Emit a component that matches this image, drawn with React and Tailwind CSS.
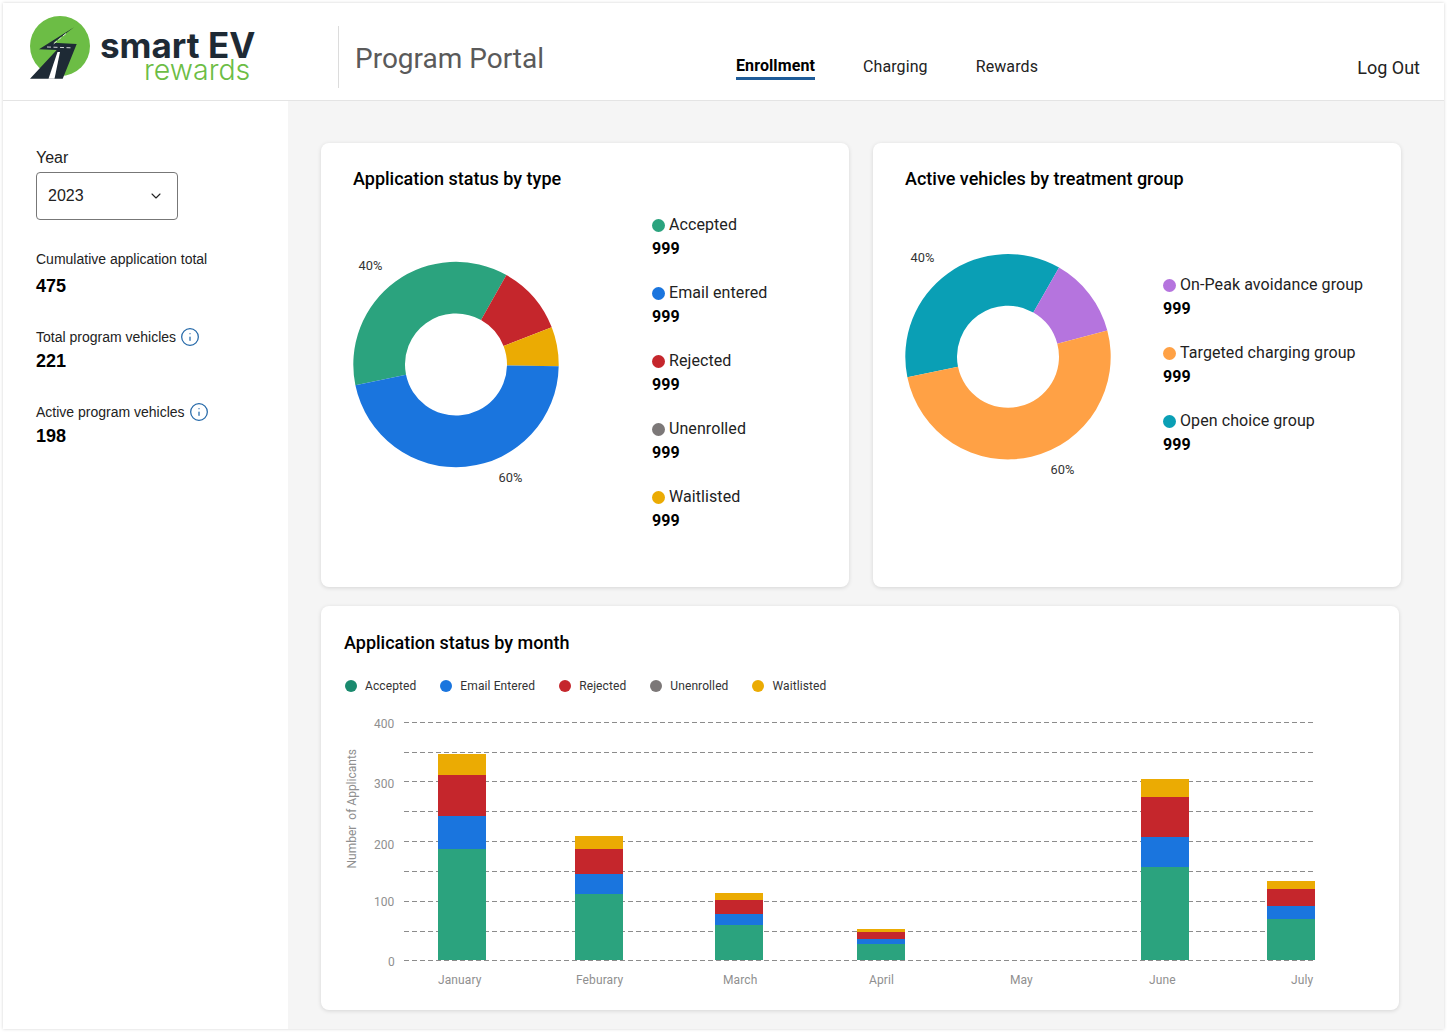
import React from "react";
import { ChevronDown, Info } from "lucide-react";

const GREEN = "#2ba37e";
const BLUE = "#1a75de";
const RED = "#c5262c";
const GREY = "#7c7878";
const YELLOW = "#ebab03";
const PURPLE = "#b574de";
const ORANGE = "#ffa145";
const TEAL = "#0a9fb5";

const roboto = { fontFamily: "Roboto, sans-serif" };

const typeLegend = [
  { label: "Accepted", color: GREEN },
  { label: "Email entered", color: BLUE },
  { label: "Rejected", color: RED },
  { label: "Unenrolled", color: GREY },
  { label: "Waitlisted", color: YELLOW },
];

const groupLegend = [
  { label: "On-Peak avoidance group", color: PURPLE },
  { label: "Targeted charging group", color: ORANGE },
  { label: "Open choice group", color: TEAL },
];

const monthLegend = [
  { label: "Accepted", color: "#1a8a6e" },
  { label: "Email Entered", color: BLUE },
  { label: "Rejected", color: RED },
  { label: "Unenrolled", color: GREY },
  { label: "Waitlisted", color: YELLOW },
];

// y edges of each stacked segment: top of yellow, red, blue, green
const bars = [
  { x: 438, edges: [754, 775, 816, 849] },
  { x: 575, edges: [836, 849, 874, 894] },
  { x: 715, edges: [893, 900, 914, 925] },
  { x: 857, edges: [929, 932, 939, 944] },
  { x: 1141, edges: [779, 797, 837, 867] },
  { x: 1267, edges: [881, 889, 906, 919] },
];

const gridLines = [722.5, 752.5, 781.5, 811.5, 841.5, 871.5, 901.5, 931.5];

const yLabels = [
  { text: "400", x: 374, y: 728 },
  { text: "300", x: 374, y: 788 },
  { text: "200", x: 374, y: 849 },
  { text: "100", x: 374, y: 906 },
  { text: "0", x: 388, y: 966 },
];

const months = [
  { text: "January", x: 438 },
  { text: "Feburary", x: 576 },
  { text: "March", x: 723 },
  { text: "April", x: 869 },
  { text: "May", x: 1010 },
  { text: "June", x: 1149 },
  { text: "July", x: 1291 },
];

function arc(cx, cy, R, r, a0, a1) {
  const rad = (a) => ((a - 90) * Math.PI) / 180;
  const pt = (rr, a) => `${cx + rr * Math.cos(rad(a))} ${cy + rr * Math.sin(rad(a))}`;
  const large = a1 - a0 > 180 ? 1 : 0;
  return `M${pt(R, a0)} A${R} ${R} 0 ${large} 1 ${pt(R, a1)} L${pt(r, a1)} A${r} ${r} 0 ${large} 0 ${pt(r, a0)} Z`;
}

function Donut({ box, cx, cy, slices, className }) {
  return (
    <svg viewBox={`${box[0]} ${box[1]} ${box[2]} ${box[3]}`} width={box[2]} height={box[3]} className={className}>
      {slices.map((s, i) => (
        <path key={i} d={arc(cx, cy, 102.7, 51, s[0], s[1])} fill={s[2]} />
      ))}
      <text x={cx - 97.5} y={cy - 95} fontSize="12.8" fill="#333" style={roboto}>40%</text>
      <text x={cx + 42.5} y={cy + 117} fontSize="12.8" fill="#333" style={roboto}>60%</text>
    </svg>
  );
}

function LegendList({ items, className }) {
  return (
    <div className={`flex flex-col gap-5 ${className}`} style={roboto}>
      {items.map((item) => (
        <div key={item.label} className="text-[16px] leading-6 text-[#222] tracking-[0.08px]">
          <div className="flex items-center gap-1">
            <span className="w-[13px] h-[13px] rounded-full" style={{ background: item.color }} />
            <span>{item.label}</span>
          </div>
          <div className="font-bold text-black">999</div>
        </div>
      ))}
    </div>
  );
}

function Logo() {
  return (
    <div className="flex items-start w-[308px]">
      <svg width="62" height="66" viewBox="30 15 62 66" className="mt-[12px] shrink-0">
        <circle cx="60" cy="46" r="30" fill="#6cbd45" />
        <path d="M74 27.3 L39 49.3 L56.7 50 L30 78.7 L62.7 78.7 L76.7 44 L53.5 42.7 Z" fill="#1e2a35" />
        <path d="M57.5 52 L60 52 L54.5 78.7 L48.5 78.7 Z" fill="#fff" />
        <path d="M66 33.5 L53.5 44" stroke="#fff" strokeWidth="0.8" strokeDasharray="4 2" fill="none" />
        <path d="M47 47 L71 47.8" stroke="#fff" strokeWidth="0.8" strokeDasharray="4 2.5" fill="none" />
      </svg>
      <div className="ml-[8px] mt-[29px] flex flex-col" style={{ fontFamily: "Inter, sans-serif" }}>
        <span className="text-[35px] leading-[26px] font-bold text-[#1e2a35] whitespace-nowrap">smart EV</span>
        <span className="ml-[44px] text-[28.5px] leading-[24px] font-light text-[#6cbd45]">rewards</span>
      </div>
    </div>
  );
}

function Header() {
  return (
    <header className="h-[98px] shrink-0 bg-white border-b border-[#e4e4e4] flex pl-[27px] pr-[24px]" style={roboto}>
      <Logo />
      <div className="mt-[23px] h-[62px] w-px bg-[#dcdcdc]" />
      <div className="ml-[16px] mt-[38px] w-[381px] text-[28px] leading-9 text-[#5a5a5a]">Program Portal</div>
      <nav className="flex gap-12 mt-[52px] text-[16px] leading-6 text-[#222] items-start tracking-[0.1px]">
        <a className="font-bold text-black border-b-[3px] border-[#1f5c99] leading-[22px]">Enrollment</a>
        <a>Charging</a>
        <a>Rewards</a>
      </nav>
      <a className="ml-auto mt-[53px] text-[18px] leading-6 text-[#222]">Log Out</a>
    </header>
  );
}

function Stat({ label, value, info, valueGap, className }) {
  return (
    <div className={className}>
      <div className="flex items-center gap-1 text-[14px] leading-[18px] text-[#222]">
        <span>{label}</span>
        {info && <Info size={20} strokeWidth={1.5} className="text-[#2468a8]" />}
      </div>
      <div className={`${valueGap} text-[18px] leading-[24px] font-bold text-black`}>{value}</div>
    </div>
  );
}

function Sidebar() {
  return (
    <aside className="w-[285px] shrink-0 bg-white pl-[33px] pt-[48px]" style={{ fontFamily: '"Liberation Sans", sans-serif' }}>
      <div className="text-[16px] leading-[18px] text-[#222]">Year</div>
      <div className="mt-[5px] w-[142px] h-[48px] border border-[#777] rounded flex items-center justify-between pl-[11px] pr-[13px] text-[16px] text-[#222]">
        <span>2023</span>
        <ChevronDown size={16} strokeWidth={1.6} />
      </div>
      <Stat label="Cumulative application total" value="475" valueGap="mt-[6px]" className="mt-[30px]" />
      <Stat label="Total program vehicles" value="221" info valueGap="mt-[2px]" className="mt-[29px]" />
      <Stat label="Active program vehicles" value="198" info valueGap="mt-[2px]" className="mt-[29px]" />
    </aside>
  );
}

function MonthChart() {
  return (
    <svg viewBox="344 708 980 292" width="980" height="292" className="mt-[13px] block" style={roboto}>
      {gridLines.map((y) => (
        <line key={y} x1="404" x2="1315" y1={y} y2={y} stroke="#8c8c8c" strokeDasharray="5 3" />
      ))}
      {bars.map((b) => (
        <g key={b.x}>
          <rect x={b.x} y={b.edges[0]} width="48" height={b.edges[1] - b.edges[0]} fill={YELLOW} />
          <rect x={b.x} y={b.edges[1]} width="48" height={b.edges[2] - b.edges[1]} fill={RED} />
          <rect x={b.x} y={b.edges[2]} width="48" height={b.edges[3] - b.edges[2]} fill={BLUE} />
          <rect x={b.x} y={b.edges[3]} width="48" height={960 - b.edges[3]} fill={GREEN} />
        </g>
      ))}
      <line x1="404" x2="1315" y1="960.5" y2="960.5" stroke="#8c8c8c" strokeDasharray="5 3" />
      {yLabels.map((l) => (
        <text key={l.text} x={l.x} y={l.y} fontSize="12" fill="#8f8f8f">{l.text}</text>
      ))}
      {months.map((m) => (
        <text key={m.text} x={m.x} y={984} fontSize="12" letterSpacing="0.1" fill="#8f8f8f">{m.text}</text>
      ))}
      <text transform="translate(356 868.5) rotate(-90)" fontSize="12" fill="#8f8f8f" className="whitespace-pre">Number  of Applicants</text>
    </svg>
  );
}

export default function App() {
  return (
    <div className="w-[1448px] h-[1034px] bg-white pl-[3px] pt-[3px] overflow-hidden">
      <div className="w-[1441px] h-[1026px] flex flex-col bg-[#f5f5f5] shadow-[0_0_3px_rgba(0,0,0,0.18)]">
        <Header />
        <div className="flex flex-1 min-h-0">
          <Sidebar />
          <main className="flex-1 pl-[33px] pt-[42px]" style={roboto}>
            <div className="flex gap-6">
              <section className="w-[528px] h-[444px] bg-white rounded-lg shadow-[0_1px_4px_rgba(0,0,0,0.13)] px-8 pt-6">
                <h2 className="text-[18px] leading-6 font-medium text-black">Application status by type</h2>
                <div className="flex items-start mt-[22px]">
                  <Donut
                    box={[353, 213, 299, 290]}
                    cx={456}
                    cy={364.5}
                    slices={[
                      [258.4, 389.4, GREEN],
                      [29.4, 68.8, RED],
                      [68.8, 91, YELLOW],
                      [91, 258.4, BLUE],
                    ]}
                  />
                  <LegendList items={typeLegend} />
                </div>
              </section>
              <section className="w-[528px] h-[444px] bg-white rounded-lg shadow-[0_1px_4px_rgba(0,0,0,0.13)] px-8 pt-6">
                <h2 className="text-[18px] leading-6 font-medium text-black">Active vehicles by treatment group</h2>
                <div className="flex items-start mt-[22px]">
                  <Donut
                    box={[905, 213, 258, 290]}
                    cx={1008}
                    cy={356.7}
                    slices={[
                      [258.5, 389.8, TEAL],
                      [29.8, 75.2, PURPLE],
                      [75.2, 258.5, ORANGE],
                    ]}
                  />
                  <LegendList items={groupLegend} className="mt-[60px]" />
                </div>
              </section>
            </div>
            <section className="mt-[19px] w-[1078px] h-[404px] bg-white rounded-lg shadow-[0_1px_4px_rgba(0,0,0,0.13)] pl-[23px] pt-[25px]">
              <h2 className="text-[18px] leading-6 font-medium text-black">Application status by month</h2>
              <div className="mt-[22px] ml-px h-[18px] flex items-center gap-6 text-[12px] tracking-[0.1px] text-[#333]">
                {monthLegend.map((item) => (
                  <div key={item.label} className="flex items-center gap-2">
                    <span className="w-3 h-3 rounded-full" style={{ background: item.color }} />
                    <span>{item.label}</span>
                  </div>
                ))}
              </div>
              <MonthChart />
            </section>
          </main>
        </div>
      </div>
    </div>
  );
}
